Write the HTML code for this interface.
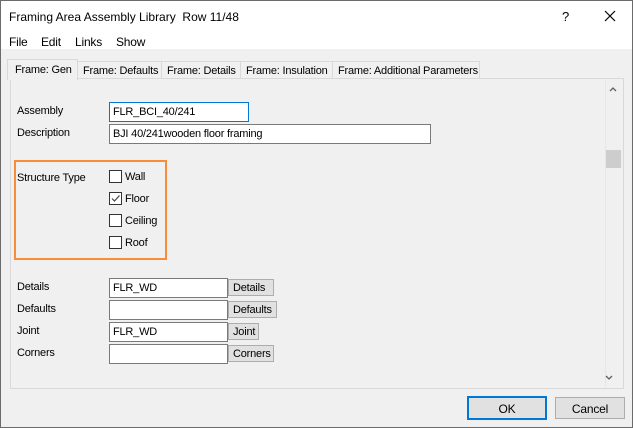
<!DOCTYPE html>
<html><head><style>
*{margin:0;padding:0;box-sizing:border-box}
body{width:633px;height:428px;background:#f0f0f0;font-family:"Liberation Sans",sans-serif;font-size:11px;color:#000;position:relative;overflow:hidden;letter-spacing:-0.2px}
.win{position:absolute;left:0;top:0;width:633px;height:428px;border:1px solid #6b6b6b;background:#f0f0f0}
.top{position:absolute;left:0;top:0;width:631px;height:48px;background:#fff}
.a{position:absolute;white-space:nowrap}
.tab{position:absolute;top:61px;height:18px;border:1px solid #d9d9d9;border-bottom:none;background:#f0f0f0;padding:3px 0 0 5px}
.panel{position:absolute;left:10px;top:78px;width:614px;height:311px;border:1px solid #d9d9d9;background:#f0f0f0}
.in{position:absolute;background:#fff;border:1px solid #7a7a7a;height:20px;padding:3px 0 0 3px}
.btn{position:absolute;background:#e1e1e1;border:1px solid #adadad;height:17px;padding:2px 0 0 4px}
.cb{position:absolute;left:109px;width:13px;height:13px;border:1px solid #333;background:#fff}
</style></head><body>
<div class="win">
<div class="top"></div>
<div class="a" style="left:8px;top:9px;font-size:12px;letter-spacing:0">Framing Area Assembly Library&nbsp; Row 11/48</div>
<div class="a" style="left:561px;top:8px;font-size:13px">?</div>
<svg class="a" style="left:603px;top:9px" width="12" height="12"><path d="M1 1L11 11M11 1L1 11" stroke="#000" stroke-width="1.2"/></svg>
<div class="a" style="left:8px;top:34px;font-size:12px">File</div>
<div class="a" style="left:40px;top:34px;font-size:12px">Edit</div>
<div class="a" style="left:74px;top:34px;font-size:12px">Links</div>
<div class="a" style="left:115px;top:34px;font-size:12px">Show</div>
</div>
<div class="tab" style="left:77px;width:85px">Frame: Defaults</div>
<div class="tab" style="left:161px;width:80px">Frame: Details</div>
<div class="tab" style="left:240px;width:93px">Frame: Insulation</div>
<div class="tab" style="left:332px;width:148px">Frame: Additional Parameters</div>
<div class="panel"></div>
<div class="tab" style="left:7px;top:59px;width:71px;height:21px;z-index:2;background:#f0f0f0;padding-top:4px;padding-left:7px">Frame: Gen</div>
<div class="a" style="left:605px;top:80px;width:17px;height:307px;background:#f0f0f0;border-left:1px solid #e6e6e6"></div>
<div class="a" style="left:606px;top:150px;width:15px;height:18px;background:#cdcdcd"></div>
<svg class="a" style="left:609px;top:86px" width="8" height="6"><path d="M1 5L4 2L7 5" stroke="#606060" stroke-width="1.3" fill="none"/></svg>
<svg class="a" style="left:605px;top:375px" width="8" height="6"><path d="M1 1L4 4L7 1" stroke="#606060" stroke-width="1.3" fill="none"/></svg>

<div class="a" style="left:17px;top:105px">Assembly</div>
<div class="in" style="left:109px;top:102px;width:140px;border-color:#0078d7">FLR_BCI_40/241</div>
<div class="a" style="left:17px;top:127px">Description</div>
<div class="in" style="left:109px;top:124px;width:322px">BJI 40/241wooden floor framing</div>

<div class="a" style="left:14px;top:160px;width:153px;height:100px;border:2px solid #f98c3a"></div>
<div class="a" style="left:17px;top:172px">Structure Type</div>
<div class="cb" style="top:170px"></div><div class="a" style="left:125px;top:171px">Wall</div>
<div class="cb" style="top:192px"></div><svg class="a" style="left:110px;top:193px" width="11" height="11"><path d="M2 5.5L4.5 8L9.5 2.5" stroke="#444" stroke-width="1.2" fill="none"/></svg><div class="a" style="left:125px;top:193px">Floor</div>
<div class="cb" style="top:214px"></div><div class="a" style="left:125px;top:215px">Ceiling</div>
<div class="cb" style="top:236px"></div><div class="a" style="left:125px;top:237px">Roof</div>

<div class="a" style="left:17px;top:281px">Details</div>
<div class="in" style="left:109px;top:278px;width:119px">FLR_WD</div>
<div class="btn" style="left:228px;top:279px;width:46px">Details</div>
<div class="a" style="left:17px;top:303px">Defaults</div>
<div class="in" style="left:109px;top:300px;width:119px"></div>
<div class="btn" style="left:228px;top:301px;width:49px">Defaults</div>
<div class="a" style="left:17px;top:325px">Joint</div>
<div class="in" style="left:109px;top:322px;width:119px">FLR_WD</div>
<div class="btn" style="left:228px;top:323px;width:31px">Joint</div>
<div class="a" style="left:17px;top:347px">Corners</div>
<div class="in" style="left:109px;top:344px;width:119px"></div>
<div class="btn" style="left:228px;top:345px;width:46px">Corners</div>

<div class="a" style="left:467px;top:396px;width:80px;height:24px;border:2px solid #0078d7;background:#e1e1e1;text-align:center;padding-top:4px;font-size:12px">OK</div>
<div class="a" style="left:555px;top:397px;width:70px;height:22px;border:1px solid #adadad;background:#e1e1e1;text-align:center;padding-top:4px;font-size:12px">Cancel</div>
</body></html>
